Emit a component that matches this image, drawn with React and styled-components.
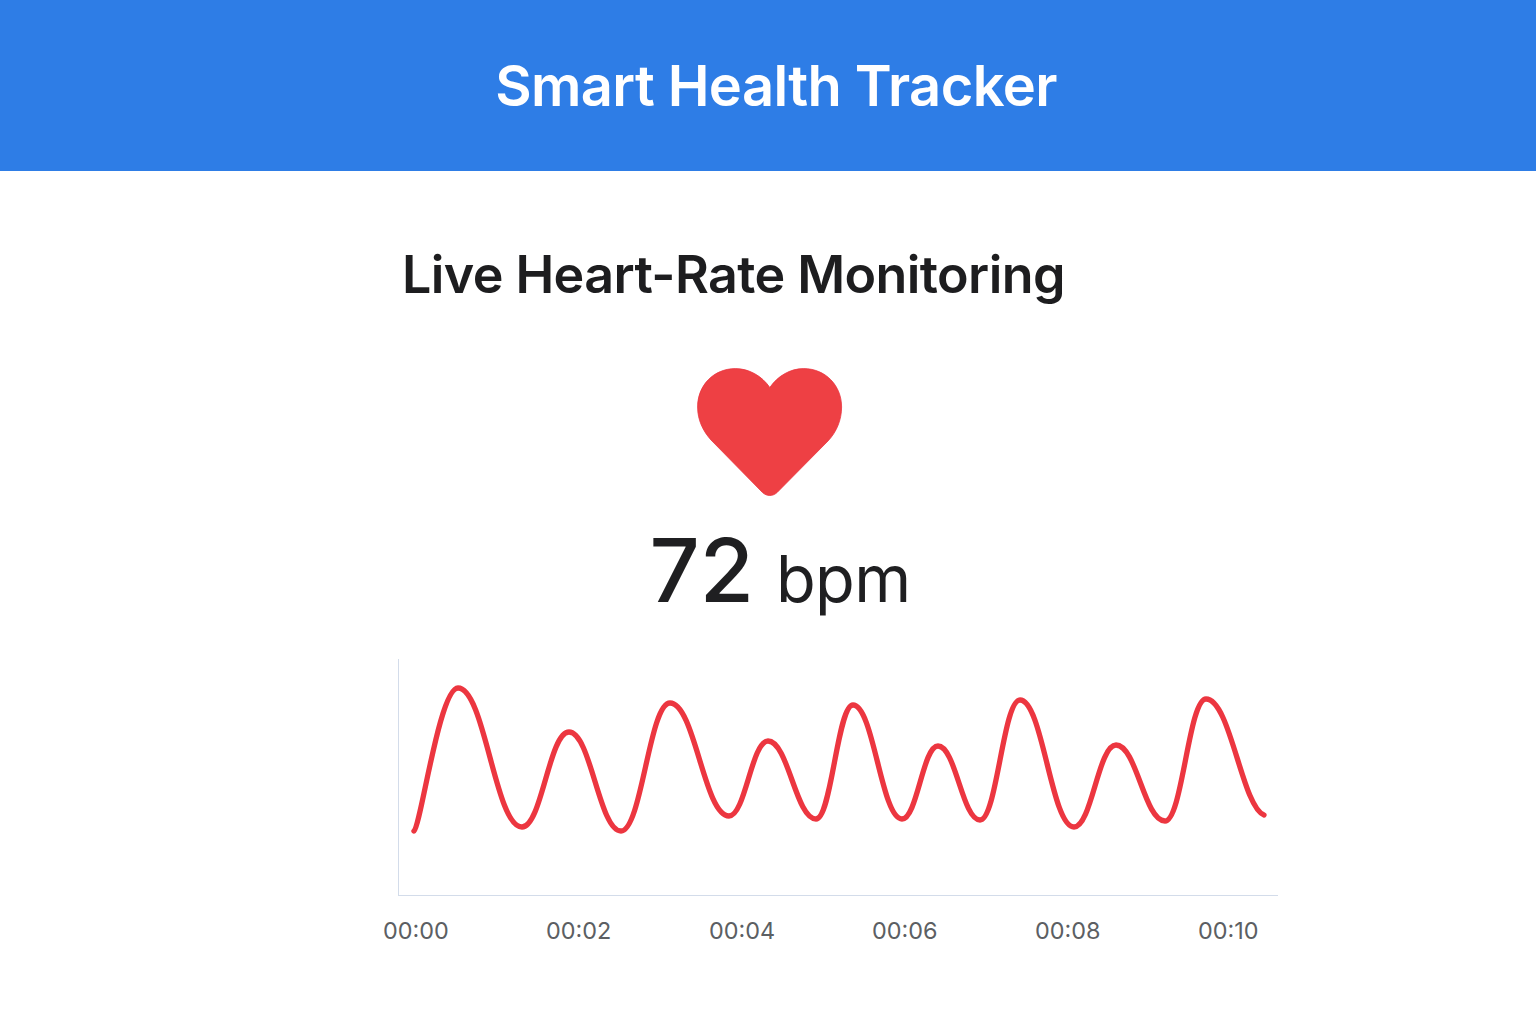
import React from 'react'
import styled, { createGlobalStyle } from 'styled-components'

const GlobalStyle = createGlobalStyle`
  html, body {
    margin: 0;
    padding: 0;
    background: #ffffff;
    font-family: Inter, 'Liberation Sans', sans-serif;
  }
`

const Page = styled.div`
  width: 1536px;
  height: 1024px;
  overflow: hidden;
`

const Header = styled.header`
  height: 171px;
  background: #2e7de6;
  display: flex;
  align-items: center;
  justify-content: center;
  padding-left: 16px;
`

const Title = styled.h1`
  margin: 0;
  color: #ffffff;
  font-size: 56px;
  font-weight: 600;
  letter-spacing: -0.6px;
  line-height: 1;
`

const Main = styled.main`
  width: 880px;
  margin-left: 398px;
  padding-top: 73px;
`

const Heading = styled.h2`
  margin: 0 0 0 4px;
  color: #1d1d1f;
  font-size: 52px;
  font-weight: 600;
  letter-spacing: -0.6px;
  line-height: 62px;
`

const Hero = styled.section`
  width: 744px;
  display: flex;
  flex-direction: column;
  align-items: center;
  margin-top: 62px;
`

const HeartIcon = styled.svg`
  display: block;
  width: 146px;
  height: 130px;
`

const Reading = styled.div`
  display: flex;
  align-items: baseline;
  gap: 22px;
  margin-left: 20px;
  margin-top: 17px;
  color: #1f1f21;
  line-height: 110px;
`

const Value = styled.span`
  font-size: 88px;
  font-weight: 500;
`

const Unit = styled.span`
  font-size: 65px;
  font-weight: 400;
  letter-spacing: -0.7px;
`

const Plot = styled.div`
  height: 236px;
  margin-top: 25px;
  border-left: 1px solid #d3dcea;
  border-bottom: 1px solid #d3dcea;
`

const PlotSvg = styled.svg`
  display: block;
  width: 879px;
  height: 236px;
`

const Ticks = styled.div`
  margin: 21px 0 0 -15px;
  display: grid;
  grid-template-columns: repeat(6, 163px);
`

const Tick = styled.span`
  color: #5c5f63;
  font-size: 23.4px;
  font-weight: 400;
  line-height: 28px;
`

// turning points of the trace, in page pixels
const TRACE = [
  [414, 831], [458, 688], [522, 827], [569, 732], [621, 831], [670, 703],
  [729, 816], [768, 741], [816, 819], [853, 705], [902, 819], [938, 746],
  [980, 820], [1020, 700], [1074, 827], [1116, 745], [1165, 821], [1206, 699],
  [1264, 815],
]

const tracePath = () => {
  const pts = TRACE.map(([x, y]) => [x - 399, y - 659])
  const last = pts.length - 1
  let d = `M${pts[0][0]} ${pts[0][1]}`
  for (let i = 1; i <= last; i++) {
    const [x0, y0] = pts[i - 1]
    const [x1, y1] = pts[i]
    const k = (x1 - x0) * 0.42
    // the two ends of the trace are cut mid-slope, not at a turning point
    const c0 = i === 1 ? `${x0 + 7} ${y0 - 6}` : `${x0 + k} ${y0}`
    const c1 = i === last ? `${x1 - 22} ${y1 - 8}` : `${x1 - k} ${y1}`
    d += ` C${c0} ${c1} ${x1} ${y1}`
  }
  return d
}

const TICKS = ['00:00', '00:02', '00:04', '00:06', '00:08', '00:10']

const App = () => {
  return (
    <>
      <GlobalStyle />
      <Page>
        <Header>
          <Title>Smart Health Tracker</Title>
        </Header>
        <Main>
          <Heading>Live Heart-Rate Monitoring</Heading>
          <Hero>
            <HeartIcon viewBox="0 0 146 130">
              <path
                d="M72.800 19.500C65 8 52 .6 38.500 .6 16.500 .6 .6 17.500 .6 39c0 13 5.400 24 13.400 33L65.500 124.500c4.400 4 10.200 4 14.600 0L131 73c8.500-9 13.600-21 13.600-34 0-21.500-16.100-38.400-38-38.400-13.500 0-25.800 7.400-33.800 18.900Z"
                fill="#ee4044"
                stroke="#ea3540"
                strokeWidth="0.8"
              />
            </HeartIcon>
            <Reading>
              <Value>72</Value>
              <Unit>bpm</Unit>
            </Reading>
          </Hero>
          <Plot>
            <PlotSvg viewBox="0 0 879 236">
              <path
                d={tracePath()}
                fill="none"
                stroke="#ec3640"
                strokeWidth="5.300"
                strokeLinecap="round"
                strokeLinejoin="round"
              />
            </PlotSvg>
          </Plot>
          <Ticks>
            {TICKS.map((t) => (
              <Tick key={t}>{t}</Tick>
            ))}
          </Ticks>
        </Main>
      </Page>
    </>
  )
}

export default App
